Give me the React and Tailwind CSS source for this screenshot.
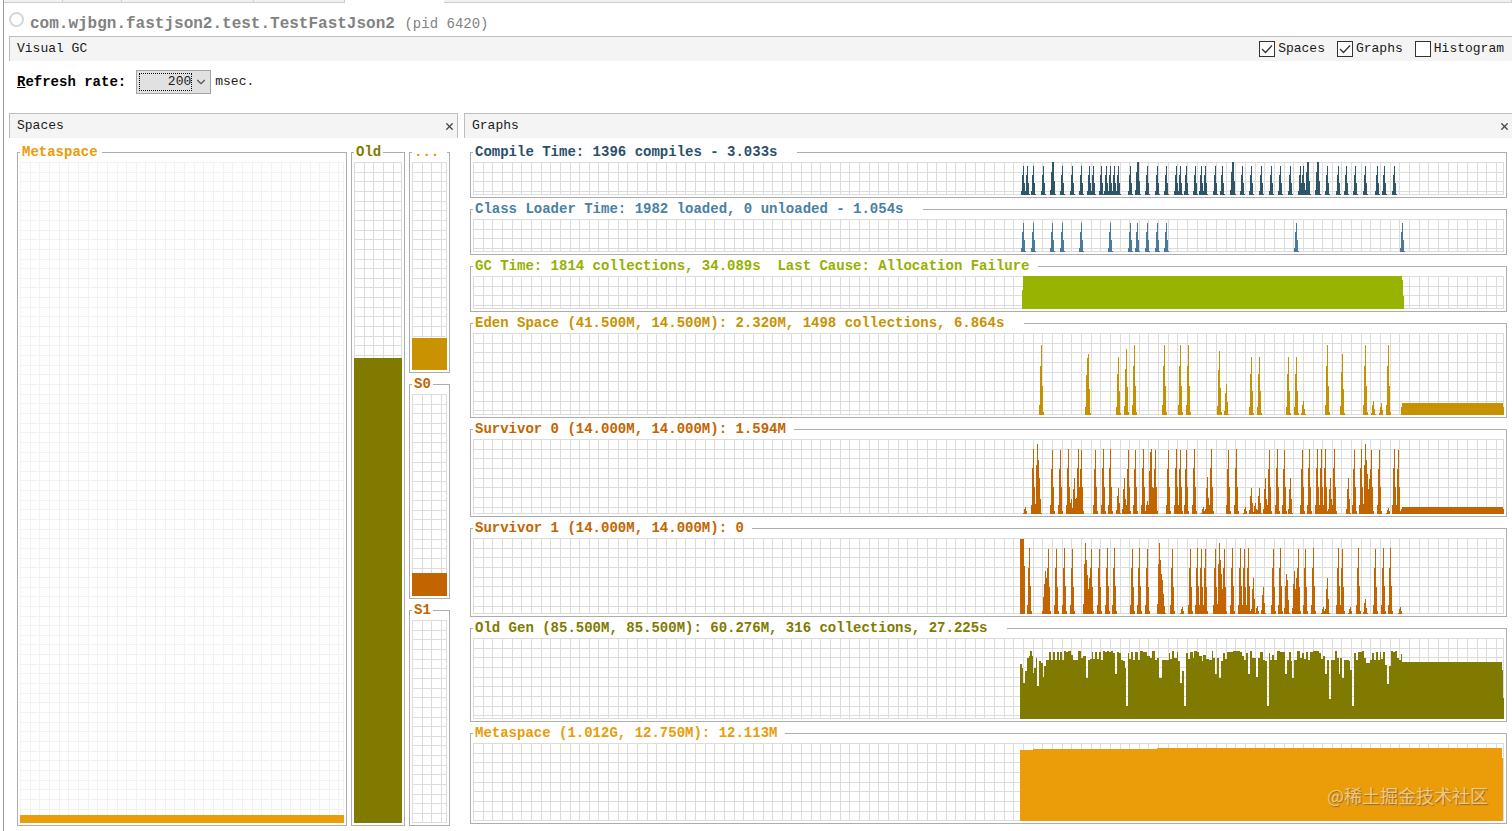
import React, { useState } from "react";
import { ChevronDown, X } from "lucide-react";

const CHART_WIDTH = 1031;
const GRID_STEP = 9.65;
// x of the first recorded sample inside a chart
const ORIGIN = 537;
const KERNEL = [0.14, 0.7, 1, 0.42, 0.04];

const same = (height, xs) => xs.map(x => [x, height]);

const COMPILE = [
  ...same(29, [
    13, 17, 23, 33, 52, 62, 71, 79, 83, 91, 96, 100, 104, 108, 120, 137, 147, 156, 166, 170,
    176, 185, 191, 195, 205, 212, 232, 241, 251, 261, 270, 280, 290, 293, 317, 328, 336, 345,
    355, 367, 374, 384,
  ]),
  ...same(33, [42, 43, 127, 128, 222, 223, 297, 298, 307, 308]),
];

const CLASS_LOADER = same(29, [13, 23, 42, 52, 71, 100, 120, 127, 137, 147, 156, 286, 392]);

const EDEN = [
  [31, 70], [77, 57], [78, 61], [108, 58], [116, 66], [124, 70], [154, 70], [170, 70],
  [178, 70], [209, 64], [216, 31], [241, 58], [249, 58], [278, 58], [286, 58], [293, 14],
  [317, 70], [332, 61], [355, 70], [363, 14], [371, 12], [378, 70],
];

const SURVIVOR_0 = [
  [15, 7], [23, 65], [27, 70], [28, 54], [29, 36], [42, 64], [50, 64], [58, 65], [61, 15],
  [64, 36], [66, 16], [68, 65], [71, 64], [85, 64], [93, 65], [100, 65], [108, 26], [114, 36],
  [118, 64], [125, 64], [133, 65], [137, 13], [140, 62], [141, 65], [143, 26], [145, 64],
  [158, 64], [166, 65], [170, 64], [176, 64], [184, 65], [193, 7], [197, 37], [201, 65],
  [218, 64], [226, 65], [235, 7], [241, 26], [245, 11], [249, 26], [255, 36], [259, 64],
  [267, 65], [274, 64], [280, 36], [292, 64], [299, 65], [307, 65], [311, 65], [315, 65],
  [320, 36], [324, 65], [338, 36], [344, 64], [351, 65], [355, 70], [356, 54], [357, 40],
  [359, 35], [361, 64], [369, 64], [378, 6], [384, 65], [388, 64],
];

const SURVIVOR_1 = [
  [19, 66], [34, 24], [35, 43], [36, 36], [38, 65], [46, 65], [54, 66], [62, 65], [75, 71],
  [76, 54], [77, 39], [79, 36], [81, 65], [89, 65], [97, 66], [104, 66], [122, 65], [129, 66],
  [137, 65], [149, 71], [150, 54], [151, 40], [152, 34], [153, 20], [162, 65], [172, 7],
  [180, 65], [187, 66], [191, 65], [195, 65], [205, 65], [209, 71], [210, 54], [211, 40],
  [213, 36], [214, 65], [222, 66], [230, 66], [234, 65], [238, 66], [243, 36], [247, 8],
  [253, 27], [263, 65], [270, 66], [276, 40], [277, 34], [284, 43], [286, 36], [288, 65],
  [295, 65], [303, 66], [313, 7], [317, 36], [328, 66], [332, 65], [340, 7], [348, 66],
  [355, 15], [365, 65], [373, 66], [380, 66], [390, 7],
];

// [x, distance from the top], both in thirds of a unit
const OLD_GEN = [
  [30, 77], [35, 90], [38, 135], [44, 135], [46, 100], [52, 60], [56, 55], [60, 40], [65, 55],
  [70, 105], [73, 90], [77, 60], [82, 145], [88, 70], [93, 75], [99, 117], [103, 85],
  [108, 67], [117, 43], [122, 65], [128, 42], [134, 65], [140, 42], [146, 67], [151, 42],
  [157, 67], [163, 40], [168, 43], [175, 40], [183, 50], [190, 67], [198, 67], [205, 40],
  [213, 60], [220, 55], [227, 120], [233, 67], [240, 62], [245, 42], [250, 63], [256, 43],
  [262, 63], [268, 43], [273, 67], [279, 40], [285, 43], [290, 40], [296, 43], [302, 40],
  [308, 45], [314, 108], [320, 43], [327, 45], [332, 67], [340, 70], [344, 90], [349, 205],
  [354, 45], [358, 63], [364, 43], [370, 65], [376, 43], [383, 67], [390, 40], [398, 43],
  [405, 42], [412, 55], [420, 60], [426, 40], [435, 67], [440, 60], [448, 120], [455, 67],
  [470, 67], [476, 45], [480, 63], [487, 40], [493, 60], [500, 43], [505, 70], [511, 135],
  [516, 100], [522, 205], [528, 45], [534, 63], [540, 43], [548, 60], [553, 40], [560, 43],
  [567, 55], [575, 70], [580, 50], [588, 63], [598, 67], [605, 40], [610, 60], [616, 108],
  [620, 60], [627, 120], [634, 70], [640, 45], [646, 63], [652, 42], [660, 43], [668, 40],
  [680, 40], [690, 43], [697, 55], [702, 67], [708, 45], [714, 108], [720, 40], [726, 60],
  [737, 117], [743, 60], [750, 43], [760, 67], [766, 70], [772, 203], [776, 45], [781, 67],
  [786, 50], [792, 67], [800, 40], [810, 43], [816, 42], [824, 108], [830, 65], [836, 43],
  [842, 70], [847, 120], [853, 65], [860, 40], [870, 60], [876, 45], [882, 63], [888, 43],
  [893, 67], [900, 43], [910, 40], [920, 40], [928, 45], [933, 62], [939, 55], [944, 108],
  [950, 67], [957, 183], [963, 67], [970, 67], [976, 40], [980, 60], [986, 108], [991, 60],
  [997, 120], [1003, 67], [1017, 70], [1021, 95], [1026, 203], [1032, 45], [1038, 67],
  [1044, 42], [1055, 40], [1063, 60], [1068, 75], [1080, 67], [1085, 45], [1091, 67],
  [1097, 43], [1103, 67], [1109, 43], [1114, 63], [1120, 42], [1126, 80], [1131, 137],
  [1136, 85], [1142, 40], [1150, 42], [1156, 40], [1162, 60], [1167, 67], [1172, 48],
  [1176, 72], [1477, 95], [1480, 180], [1482, 180],
];

// Turns a list of [x, height] events into one stepped outline
function spikePath(spikes, height) {
  const columns = {};
  spikes.forEach(([x, h]) => {
    KERNEL.forEach((k, i) => {
      const col = x + i - 2;
      columns[col] = Math.max(columns[col] || 0, Math.round(h * k));
    });
  });
  return Object.keys(columns)
    .map(col => `M${ORIGIN + Number(col)} ${height}v${-columns[col]}h1v${columns[col]}z`)
    .join("");
}

function oldGenPath(height) {
  const steps = OLD_GEN.map(([x, y]) => `H${ORIGIN + Math.round(x / 3)}V${Math.round(y / 3)}`);
  return `M${ORIGIN + 10} ${height}${steps.join("")}V${height}z`;
}

const GRAPHS = [
  {
    id: "compile",
    title: "Compile Time: 1396 compiles - 3.033s",
    titleClass: "text-[#2b506a] pr-5",
    fill: "#2f5568",
    height: 33,
    heightClass: "h-[33px]",
    path: spikePath(COMPILE, 33),
  },
  {
    id: "loader",
    title: "Class Loader Time: 1982 loaded, 0 unloaded - 1.054s",
    titleClass: "text-[#4a80a4] pr-5",
    fill: "#487b9b",
    height: 33,
    heightClass: "h-[33px]",
    path: spikePath(CLASS_LOADER, 33),
  },
  {
    id: "gc",
    title: "GC Time: 1814 collections, 34.089s  Last Cause: Allocation Failure",
    titleClass: "text-[#96b000] pr-2",
    fill: "#98b300",
    height: 33,
    heightClass: "h-[33px]",
    path: "M549 33V14h1V0h379v4h1v16h1v13z",
  },
  {
    id: "eden",
    title: "Eden Space (41.500M, 14.500M): 2.320M, 1498 collections, 6.864s",
    titleClass: "text-[#c79200] pr-5",
    fill: "#c69200",
    height: 82,
    heightClass: "h-[82px]",
    path: spikePath(EDEN, 82) + "M928 82v-8h1v-4h101v4h1v8z",
  },
  {
    id: "s0",
    title: "Survivor 0 (14.000M, 14.000M): 1.594M",
    titleClass: "text-[#c26500] pr-2",
    fill: "#c26400",
    height: 75,
    heightClass: "h-[75px]",
    path: spikePath(SURVIVOR_0, 75) + "M928 75v-5h1v-2h101v2h1v5z",
  },
  {
    id: "s1",
    title: "Survivor 1 (14.000M, 14.000M): 0",
    titleClass: "text-[#c26500] pr-2",
    fill: "#c26400",
    height: 76,
    heightClass: "h-[76px]",
    path: spikePath(SURVIVOR_1, 76) + "M547 76V1h4v27h1v48z",
  },
  {
    id: "old",
    title: "Old Gen (85.500M, 85.500M): 60.276M, 316 collections, 27.225s",
    titleClass: "text-[#807a00] pr-5",
    fill: "#807a00",
    height: 81,
    heightClass: "h-[81px]",
    path: oldGenPath(81),
  },
  {
    id: "metaspace",
    title: "Metaspace (1.012G, 12.750M): 12.113M",
    titleClass: "text-[#e99c08] pr-2",
    fill: "#ea9d08",
    height: 78,
    heightClass: "h-[78px]",
    path: "M547 78V7h13v-1h124v-1h345v10h1v63z",
  },
];

// Grid paper with the recorded shape on top
function Plot({ width, height, path, fill, stroke = "#dcdcdc", className }) {
  let grid = "";
  for (let x = 0; x < width - 2; x += GRID_STEP) grid += `M${Math.round(x)}.5 0V${height}`;
  for (let y = 0; y < height - 2; y += GRID_STEP) grid += `M0 ${Math.round(y)}.5H${width}`;
  grid += `M${width - 0.5} 0V${height}M0 ${height - 0.5}H${width}`;

  return (
    <svg
      viewBox={`0 0 ${width} ${height}`}
      preserveAspectRatio="none"
      shapeRendering="crispEdges"
      aria-hidden="true"
      className={className}
    >
      <path d={grid} stroke={stroke} fill="none" />
      {path && <path d={path} fill={fill} />}
    </svg>
  );
}

function Group({ title, titleClass, className = "", children }) {
  return (
    <fieldset className={`relative flex min-w-0 flex-col border border-[#adadad] p-0.5 ${className}`}>
      <legend
        className={`pl-0.5 text-[14px] leading-4 font-bold whitespace-pre ${titleClass}`}
      >
        {title}
      </legend>
      {children}
    </fieldset>
  );
}

function PanelHeader({ title, onClose, className = "" }) {
  return (
    <header
      className={`flex h-[25px] items-center justify-between border-t border-l border-[#bdbdbd] bg-[#f4f4f4] pl-[7px] ${className}`}
    >
      <h2 className="text-[13px] leading-4">{title}</h2>
      <button type="button" aria-label={`Close ${title}`} onClick={onClose} className="px-0.5">
        <X size={11} strokeWidth={3} className="text-[#4a4a4a]" />
      </button>
    </header>
  );
}

function ViewToggle({ label, checked, onChange }) {
  return (
    <label className="flex items-center gap-[3px] text-[13px] leading-4">
      <span className="grid size-4">
        <input
          type="checkbox"
          checked={checked}
          onChange={e => onChange(e.target.checked)}
          className="col-start-1 row-start-1 size-4 appearance-none border border-[#333] bg-white"
        />
        {checked && (
          <svg
            viewBox="0 0 16 16"
            className="pointer-events-none col-start-1 row-start-1 size-4"
            fill="none"
            stroke="#333"
            strokeWidth="1.3"
          >
            <path d="M3 8l3.5 3.5L13 4.5" />
          </svg>
        )}
      </span>
      {label}
    </label>
  );
}

function SpacesPanel({ onClose }) {
  return (
    <section className="flex w-[449px] shrink-0 flex-col">
      <PanelHeader title="Spaces" onClose={onClose} className="border-r" />
      <div className="flex flex-1 gap-1 px-2 pt-1.5">
        <Group title="Metaspace" titleClass="text-[#e99c08] pr-1" className="flex-1">
          <Plot
            width={324}
            height={661}
            path="M0 653h324v8H0z"
            fill="#ea9d08"
            stroke="#f2f2f2"
            className="h-0 w-full flex-1"
          />
        </Group>
        <Group title="Old" titleClass="text-[#807a00] pr-0.5" className="w-[54px]">
          <Plot
            width={48}
            height={661}
            path="M0 196h48v465H0z"
            fill="#807a00"
            className="h-0 w-full flex-1"
          />
        </Group>
        <div className="flex w-[41px] flex-col gap-[3px]">
          <Group title="..." titleClass="w-full text-[#d39a10]" className="grow-[229] basis-0">
            <Plot
              width={35}
              height={208}
              path="M0 176h35v32H0z"
              fill="#c99200"
              className="h-0 w-full flex-1"
            />
          </Group>
          <Group title="S0" titleClass="text-[#c26500] pr-0.5" className="grow-[222] basis-0">
            <Plot
              width={35}
              height={202}
              path="M0 179h35v23H0z"
              fill="#c26400"
              className="h-0 w-full flex-1"
            />
          </Group>
          <Group title="S1" titleClass="text-[#c26500] pr-0.5" className="grow-[224] basis-0">
            <Plot width={35} height={203} className="h-0 w-full flex-1" />
          </Group>
        </div>
      </div>
    </section>
  );
}

function GraphsPanel({ onClose }) {
  return (
    <section className="flex min-w-0 flex-1 flex-col">
      <PanelHeader title="Graphs" onClose={onClose} />
      <div className="flex flex-col gap-[3px] pt-1.5 pr-[5px] pb-0.5 pl-1.5">
        {GRAPHS.map(graph => (
          <Group key={graph.id} title={graph.title} titleClass={graph.titleClass}>
            <Plot
              width={CHART_WIDTH}
              height={graph.height}
              path={graph.path}
              fill={graph.fill}
              className={`w-full ${graph.heightClass}`}
            />
            {graph.id === "metaspace" && (
              <span className="absolute right-[18px] bottom-4 font-['Noto_Sans_CJK_SC',sans-serif] text-[18px] leading-6 text-[#f3c878] [text-shadow:1px_1px_1px_#8a6a3a]">
                @稀土掘金技术社区
              </span>
            )}
          </Group>
        ))}
      </div>
    </section>
  );
}

export default function App() {
  const [rate, setRate] = useState("200");
  const [view, setView] = useState({ spaces: true, graphs: true, histogram: false });

  const toggle = key => value => setView(v => ({ ...v, [key]: value }));

  return (
    <div className="min-h-screen bg-white pl-[3px] font-['Liberation_Mono',monospace] text-[#1a1a1a]">
      <div className="flex min-h-screen flex-col border-l border-[#9a9a9a]">
        {/* Bottom edge of the document tabs */}
        <div className="flex h-[3px] [&>i]:border-r [&>i]:border-b [&>i]:border-[#cfcfcf] [&>i]:bg-[#f0f0f0]">
          <i className="w-[59px]" />
          <i className="w-[59px]" />
          <i className="w-[132px]" />
          <i className="w-[91px]" />
          <b className="w-[99px]" />
          <i className="flex-1" />
        </div>

        <div className="flex h-[33px] items-center gap-1.5 pl-[5px]">
          <span className="size-[15px] rounded-full border-2 border-[#d6d6d6]" />
          <h1 className="pt-2 text-[16px] leading-5 font-bold whitespace-nowrap text-[#828282]">
            com.wjbgn.fastjson2.test.TestFastJson2{" "}
            <span className="text-[14px] font-normal">(pid 6420)</span>
          </h1>
        </div>

        <div className="flex flex-1 flex-col pl-[5px]">
          <div className="flex h-[25px] items-center justify-between border-t border-l border-[#bdbdbd] bg-[#f4f4f4] pr-2 pl-[7px]">
            <h2 className="text-[13px] leading-4">Visual GC</h2>
            <div className="flex gap-3">
              <ViewToggle label="Spaces" checked={view.spaces} onChange={toggle("spaces")} />
              <ViewToggle label="Graphs" checked={view.graphs} onChange={toggle("graphs")} />
              <ViewToggle
                label="Histogram"
                checked={view.histogram}
                onChange={toggle("histogram")}
              />
            </div>
          </div>

          <div className="flex h-[52px] items-center pb-2.5 pl-2 text-[13px] leading-4">
            <label htmlFor="rate" className="mr-2.5 text-[14px] font-bold text-black">
              <u>R</u>efresh rate:
            </label>
            <div className="mr-1 flex h-6 w-[75px] items-center border border-[#a3a3a3] bg-[#e1e1e1] p-0.5">
              <select
                id="rate"
                value={rate}
                onChange={e => setRate(e.target.value)}
                className="h-full w-[53px] appearance-none border border-dotted border-black text-[13px] leading-4 [text-align-last:right]"
              >
                <option>100</option>
                <option>200</option>
                <option>500</option>
                <option>1000</option>
              </select>
              <ChevronDown size={14} strokeWidth={2} className="ml-0.5 text-[#555]" />
            </div>
            msec.
          </div>

          <main className="flex gap-1.5">
            {view.spaces && <SpacesPanel onClose={() => toggle("spaces")(false)} />}
            {view.graphs && <GraphsPanel onClose={() => toggle("graphs")(false)} />}
          </main>
        </div>
      </div>
    </div>
  );
}
